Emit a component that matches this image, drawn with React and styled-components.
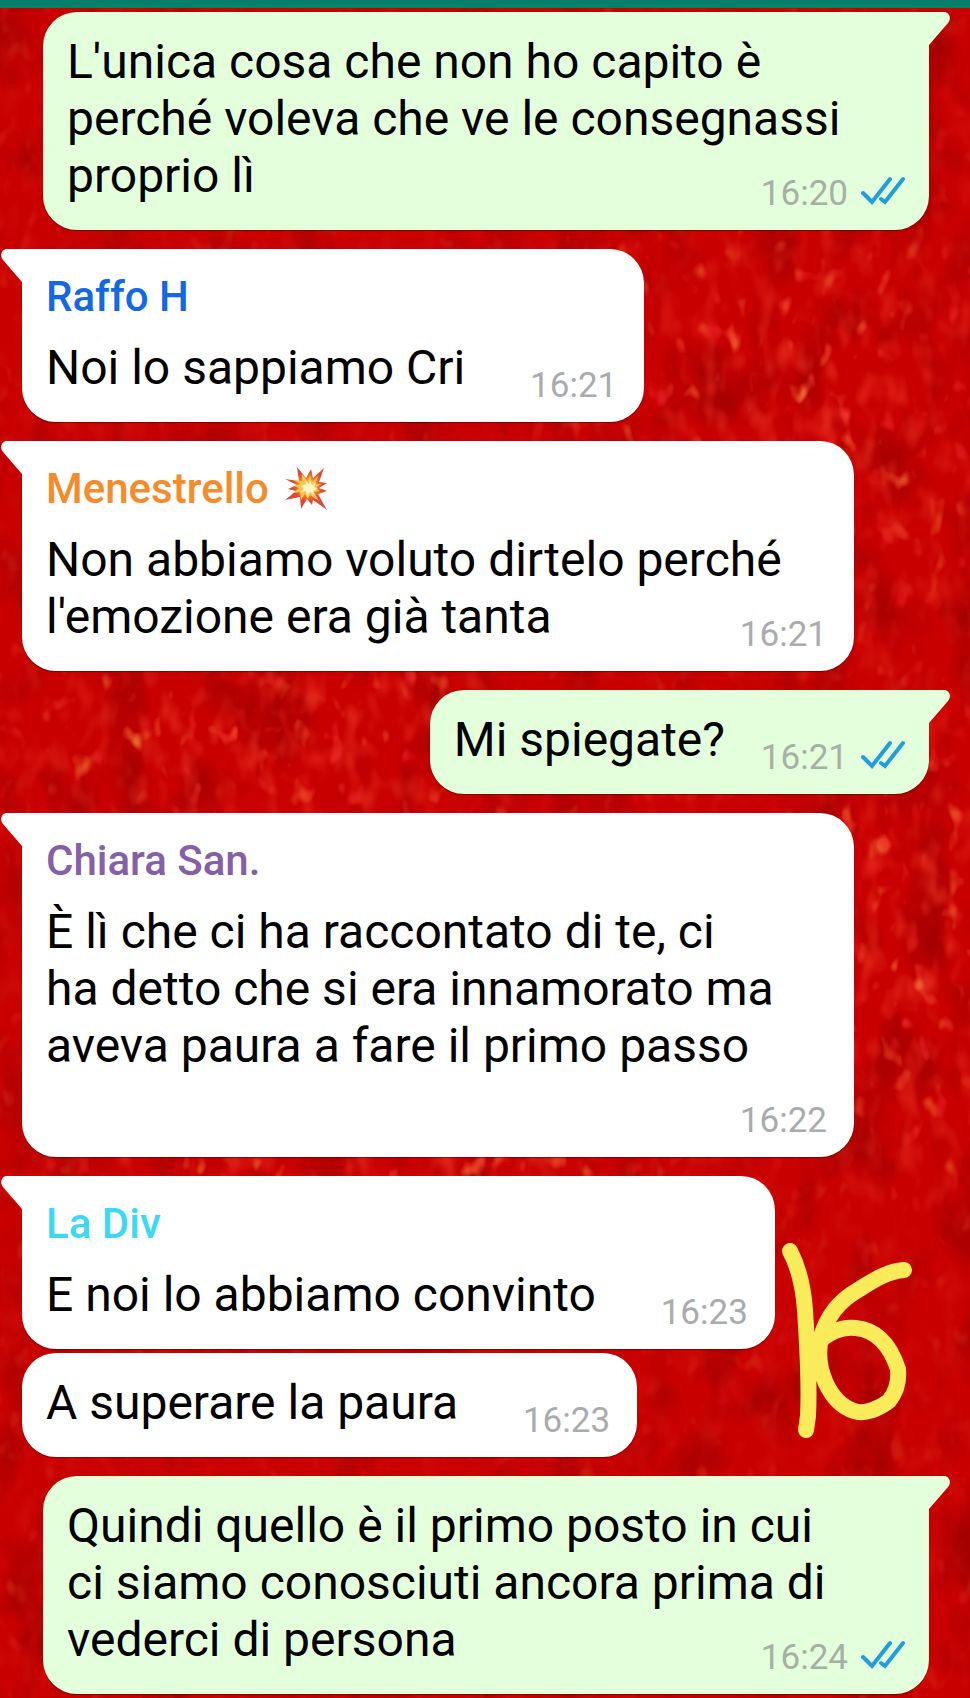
import styled, { createGlobalStyle, css } from 'styled-components';

const GlobalStyle = createGlobalStyle`
  * {
    box-sizing: border-box;
  }
  body {
    margin: 0;
    background: #c40000;
    font-family: Roboto, 'Liberation Sans', sans-serif;
  }
`;

const Chat = styled.main`
  position: relative;
  min-height: 100vh;
  border-top: 8px solid #038069;
  overflow: hidden;
`;

const Wallpaper = styled.svg`
  position: absolute;
  inset: 0;
  width: 100%;
  height: 100%;
`;

const MessageList = styled.ul`
  position: relative;
  display: flex;
  flex-direction: column;
  list-style: none;
  margin: 0;
  padding: 4px 0;
`;

const Row = styled.li`
  display: flex;
  justify-content: ${({ $mine }) => ($mine ? 'flex-end' : 'flex-start')};
  margin-top: ${({ $grouped }) => ($grouped ? '4px' : '19px')};
  padding: ${({ $mine }) => ($mine ? '0 41px 0 43px' : '0 116px 0 22px')};

  &:first-child {
    margin-top: 0;
  }
`;

const flatCorner = css`
  ${({ $mine }) =>
    $mine ? 'border-top-right-radius: 0;' : 'border-top-left-radius: 0;'}
`;

const Bubble = styled.article`
  position: relative;
  padding: 21px 24px 26px;
  border-radius: 34px;
  background: ${({ $mine }) => ($mine ? '#e4ffdb' : '#ffffff')};
  box-shadow: 0 1px 1px rgba(60, 0, 0, 0.5);
  ${({ $grouped }) => !$grouped && flatCorner}
`;

const Tail = styled.svg`
  position: absolute;
  top: 0;
  width: 24px;
  height: 34px;
  fill: ${({ $mine }) => ($mine ? '#e4ffdb' : '#ffffff')};
  ${({ $mine }) =>
    $mine ? 'left: calc(100% - 2px);' : 'right: calc(100% - 2px);'}
`;

const Author = styled.h2`
  display: flex;
  align-items: center;
  gap: 16px;
  margin: 0 0 16px;
  color: ${({ $color }) => $color};
  font-size: 42px;
  font-weight: 500;
  line-height: 53px;
`;

const Body = styled.div`
  display: grid;
`;

const Text = styled.p`
  grid-area: 1 / 1;
  margin: 0;
  color: #000000;
  font-size: 48px;
  line-height: 57px;

  /* keeps the end of the last line clear of the time */
  &::after {
    content: '';
    display: inline-block;
    width: ${({ $mine }) => ($mine ? '180px' : '155px')};
  }
`;

const Meta = styled.div`
  grid-area: 1 / 1;
  place-self: end;
  display: flex;
  align-items: center;
  gap: 12px;
  margin-bottom: -11px;
  padding-right: ${({ $mine }) => ($mine ? '0' : '3px')};
  color: ${({ $mine }) => ($mine ? '#a6b0a5' : '#a9acae')};
  font-size: 35px;
  line-height: 42px;
`;

const Ticks = styled.svg`
  width: 45px;
  height: 30px;
  margin-bottom: 6px;
`;

const Burst = styled.svg`
  width: 43px;
  height: 43px;
`;

const Doodle = styled.svg`
  position: absolute;
  top: 1232px;
  right: 56px;
  width: 140px;
  height: 210px;
`;

const messages = [
  {
    id: 1,
    mine: true,
    text: "L'unica cosa che non ho capito è perché voleva che ve le consegnassi proprio lì",
    time: '16:20',
  },
  {
    id: 2,
    author: 'Raffo H',
    color: '#1468e6',
    text: 'Noi lo sappiamo Cri',
    time: '16:21',
  },
  {
    id: 3,
    author: 'Menestrello',
    color: '#f58c2c',
    burst: true,
    text: "Non abbiamo voluto dirtelo perché l'emozione era già tanta",
    time: '16:21',
  },
  { id: 4, mine: true, text: 'Mi spiegate?', time: '16:21' },
  {
    id: 5,
    author: 'Chiara San.',
    color: '#8560a8',
    text: 'È lì che ci ha raccontato di te, ci ha\u00a0detto che si era innamorato ma aveva paura a fare il primo passo',
    time: '16:22',
  },
  {
    id: 6,
    author: 'La Div',
    color: '#3fd8f4',
    text: 'E noi lo abbiamo convinto',
    time: '16:23',
  },
  { id: 7, grouped: true, text: 'A superare la paura', time: '16:23' },
  {
    id: 8,
    mine: true,
    text: 'Quindi quello è il primo posto in cui ci\u00a0siamo conosciuti ancora prima di vederci di persona',
    time: '16:24',
  },
];

const WallpaperTexture = () => (
  <Wallpaper aria-hidden="true">
    <defs>
      <filter
        id="shade"
        x="0"
        y="0"
        width="100%"
        height="100%"
        colorInterpolationFilters="sRGB"
      >
        <feTurbulence
          type="fractalNoise"
          baseFrequency="0.02 0.012"
          numOctaves="4"
          seed="4"
        />
        <feColorMatrix values="0 0 0 0 0.64  0 0 0 0 0  0 0 0 0 0  2.4 0 0 0 -1.1" />
      </filter>
      <filter
        id="haze"
        x="0"
        y="0"
        width="100%"
        height="100%"
        colorInterpolationFilters="sRGB"
      >
        <feTurbulence
          type="fractalNoise"
          baseFrequency="0.05 0.03"
          numOctaves="2"
          seed="23"
        />
        <feColorMatrix values="0 0 0 0 0.9  0 0 0 0 0.17  0 0 0 0 0.12  2.6 0 0 0 -1.25" />
      </filter>
      <filter
        id="flecks"
        x="0"
        y="0"
        width="100%"
        height="100%"
        colorInterpolationFilters="sRGB"
      >
        <feTurbulence
          type="fractalNoise"
          baseFrequency="0.055 0.035"
          numOctaves="2"
          seed="11"
        />
        <feColorMatrix values="0 0 0 0 0.96  0 0.6 0 0 0  0 0 0 0 0.2  5 0 0 0 -3.1" />
      </filter>
      <radialGradient id="fade">
        <stop offset="0" stopColor="#fff" />
        <stop offset="1" stopColor="#fff" stopOpacity="0" />
      </radialGradient>
      <mask id="patches">
        <rect width="100%" height="100%" fill="#3a3a3a" />
        <ellipse cx="84%" cy="24%" rx="30%" ry="16%" fill="url(#fade)" />
        <ellipse cx="28%" cy="43%" rx="42%" ry="9%" fill="url(#fade)" />
        <ellipse cx="94%" cy="55%" rx="16%" ry="20%" fill="url(#fade)" />
        <ellipse cx="38%" cy="68%" rx="45%" ry="5%" fill="url(#fade)" />
      </mask>
    </defs>
    <rect width="100%" height="100%" fill="#c80000" />
    <rect width="100%" height="100%" filter="url(#shade)" />
    <g mask="url(#patches)">
      <rect width="100%" height="100%" filter="url(#haze)" />
      <rect width="100%" height="100%" filter="url(#flecks)" />
    </g>
  </Wallpaper>
);

const BurstIcon = () => (
  <Burst viewBox="0 0 43 43" role="img" aria-label="esplosione">
    <defs>
      <radialGradient id="burst" cx="0.55" cy="0.45" r="0.6">
        <stop offset="0.2" stopColor="#f6a03a" />
        <stop offset="0.6" stopColor="#e0452c" />
        <stop offset="1" stopColor="#d0525c" />
      </radialGradient>
    </defs>
    <path
      fill="url(#burst)"
      d="M12 0l9 11L26 2l2 9L39 1l-5 14 8 1-8 5 8 3-9 3 9 16-14-10-1 5-5-6-6 10-1-12-15 3 11-9-8-2 9-4L0 12l14 2z"
    />
    <path
      fill="#ffc548"
      d="M17 7l6 8 2-7 2 7 7-7-4 9 6 0-6 4 5 3-6 1 5 9-9-6-2 4-3-5-4 6-1-8-7 1 6-5-5-2 6-2-7-4 9 1z"
    />
    <path
      fill="#fff6c4"
      d="M20 13l4 4 1-4 2 5 4-3-2 5 4 1-5 3 2 5-5-4-3 4-1-5-5 1 3-4-3-2 5-2z"
    />
  </Burst>
);

const Message = ({ mine, grouped, author, color, burst, text, time }) => (
  <Row $mine={mine} $grouped={grouped}>
    <Bubble $mine={mine} $grouped={grouped}>
      {!grouped && (
        <Tail $mine={mine} viewBox="0 0 24 34" aria-hidden="true">
          <path
            d={
              mine
                ? 'M0 0H17C22 0 25 6 21 11L2 33H0Z'
                : 'M24 0H7C2 0-1 6 3 11L22 33H24Z'
            }
          />
        </Tail>
      )}
      {author && (
        <Author $color={color}>
          {author}
          {burst && <BurstIcon />}
        </Author>
      )}
      <Body>
        <Text $mine={mine}>{text}</Text>
        <Meta $mine={mine}>
          <time>{time}</time>
          {mine && (
            <Ticks viewBox="0 0 45 30" role="img" aria-label="Letto">
              <path
                d="M3 17l9 9L30 3M21 23l4 3L43 3"
                fill="none"
                stroke="#219fdb"
                strokeWidth="4"
                strokeLinecap="round"
              />
            </Ticks>
          )}
        </Meta>
      </Body>
    </Bubble>
  </Row>
);

export default function App() {
  return (
    <>
      <GlobalStyle />
      <Chat>
        <WallpaperTexture />
        <MessageList>
          {messages.map(({ id, ...message }) => (
            <Message key={id} {...message} />
          ))}
        </MessageList>
        <Doodle viewBox="0 0 140 210" role="img" aria-label="16">
          <path
            d="M16 11C24 26 29 43 31 70C33 105 36 140 34 176L32 190M130 30C113 31 97 42 84 50C63 62 52 78 47 98C40 129 56 163 80 171C91 175 106 168 115 161C123 151 125 139 124 129C116 105 103 90 82 88C68 86 52 93 45 103"
            fill="none"
            stroke="#faeb5b"
            strokeWidth="16"
            strokeLinecap="round"
            strokeLinejoin="round"
          />
        </Doodle>
      </Chat>
    </>
  );
}
